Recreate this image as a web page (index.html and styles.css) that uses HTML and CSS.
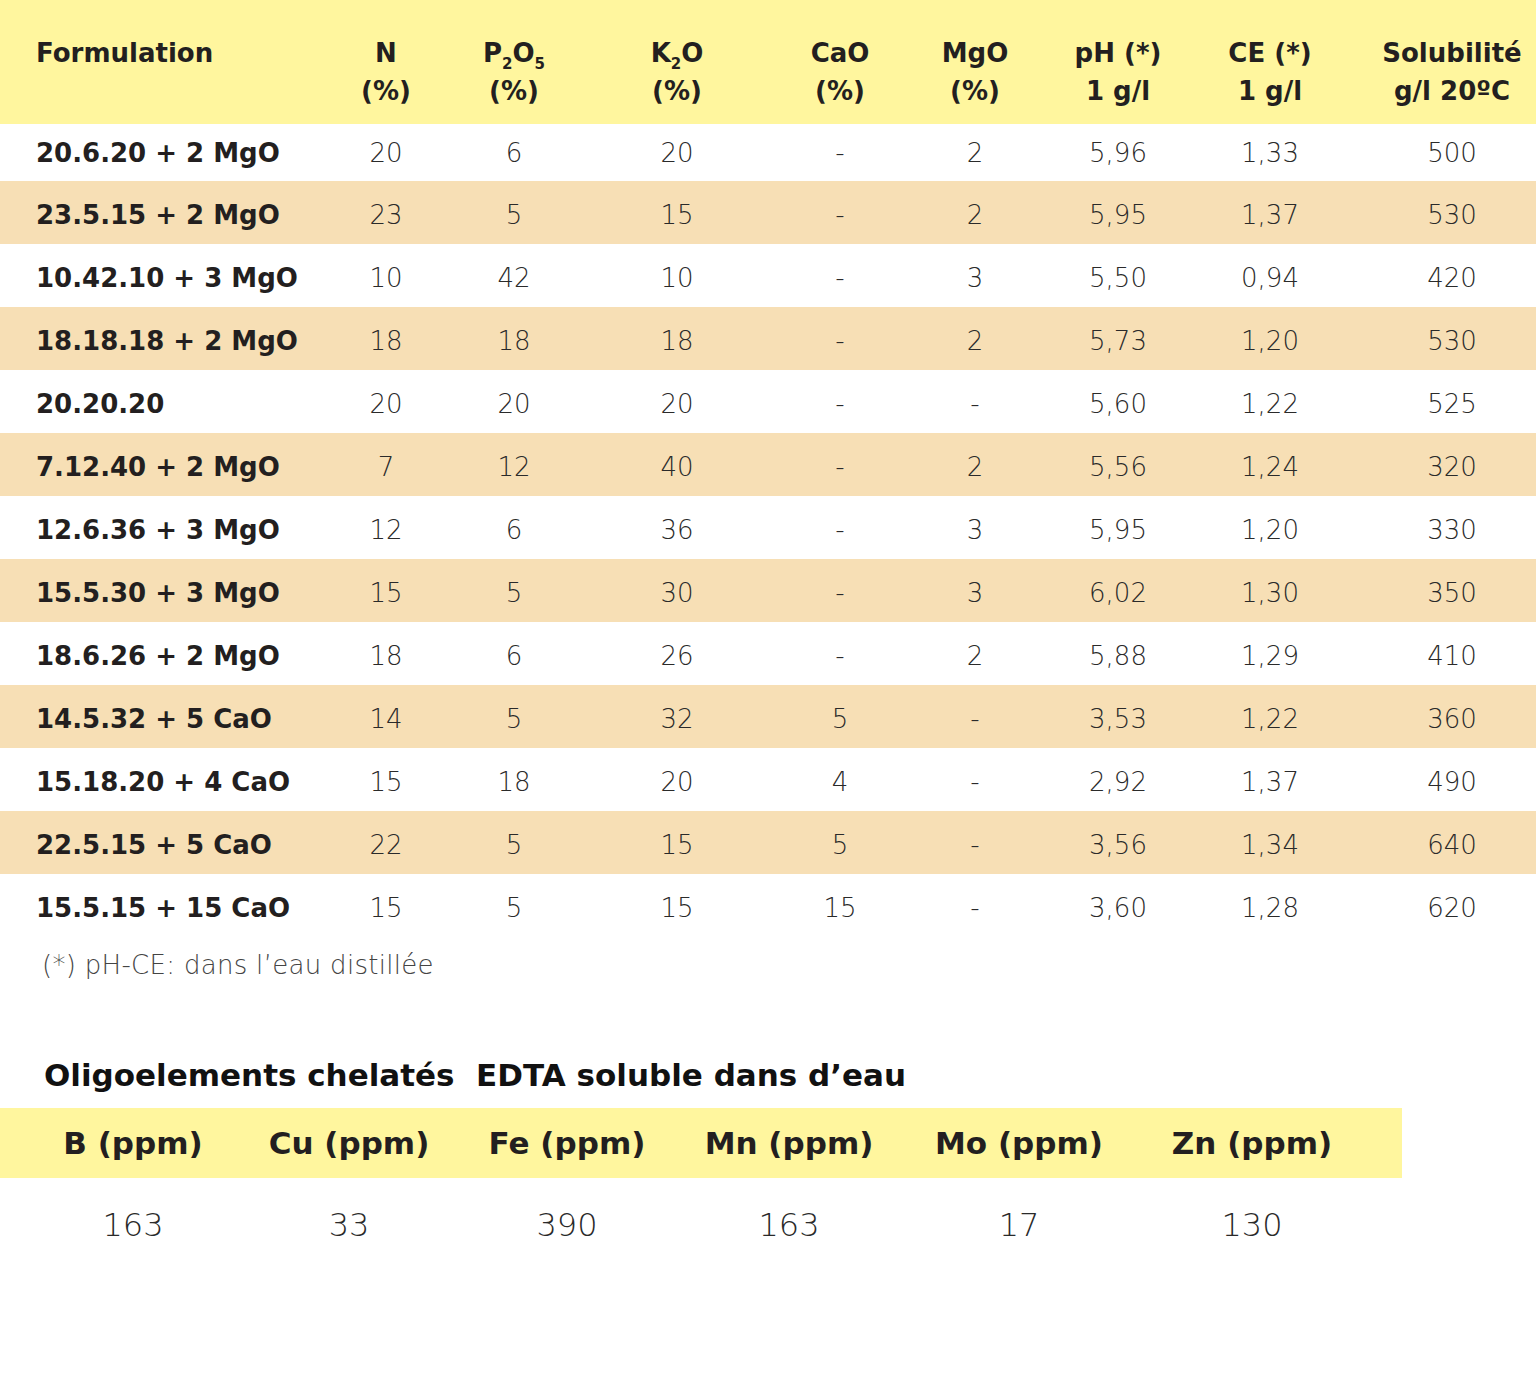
FILE: index.html
```html
<!DOCTYPE html>
<html lang="fr">
<head>
<meta charset="utf-8">
<title>Formulations</title>
<link rel="stylesheet" href="styles.css">
</head>
<body>
<table class="main">
  <colgroup>
    <col class="c-form"><col class="c-n"><col class="c-p"><col class="c-k"><col class="c-ca"><col class="c-mg"><col class="c-ph"><col class="c-ce"><col class="c-sol">
  </colgroup>
  <thead>
    <tr>
      <th class="first">Formulation</th>
      <th>N<br>(%)</th>
      <th>P<sub>2</sub>O<sub>5</sub><br>(%)</th>
      <th>K<sub>2</sub>O<br>(%)</th>
      <th>CaO<br>(%)</th>
      <th>MgO<br>(%)</th>
      <th>pH (*)<br>1 g/l</th>
      <th>CE (*)<br>1 g/l</th>
      <th class="sol">Solubilité<br>g/l 20ºC</th>
    </tr>
  </thead>
  <tbody>
    <tr class="r1"><td class="first">20.6.20 + 2 MgO</td><td>20</td><td>6</td><td>20</td><td>-</td><td>2</td><td>5,96</td><td>1,33</td><td class="sol">500</td></tr>
    <tr class="alt"><td class="first">23.5.15 + 2 MgO</td><td>23</td><td>5</td><td>15</td><td>-</td><td>2</td><td>5,95</td><td>1,37</td><td class="sol">530</td></tr>
    <tr><td class="first">10.42.10 + 3 MgO</td><td>10</td><td>42</td><td>10</td><td>-</td><td>3</td><td>5,50</td><td>0,94</td><td class="sol">420</td></tr>
    <tr class="alt"><td class="first">18.18.18 + 2 MgO</td><td>18</td><td>18</td><td>18</td><td>-</td><td>2</td><td>5,73</td><td>1,20</td><td class="sol">530</td></tr>
    <tr><td class="first">20.20.20</td><td>20</td><td>20</td><td>20</td><td>-</td><td>-</td><td>5,60</td><td>1,22</td><td class="sol">525</td></tr>
    <tr class="alt"><td class="first">7.12.40 + 2 MgO</td><td>7</td><td>12</td><td>40</td><td>-</td><td>2</td><td>5,56</td><td>1,24</td><td class="sol">320</td></tr>
    <tr><td class="first">12.6.36 + 3 MgO</td><td>12</td><td>6</td><td>36</td><td>-</td><td>3</td><td>5,95</td><td>1,20</td><td class="sol">330</td></tr>
    <tr class="alt"><td class="first">15.5.30 + 3 MgO</td><td>15</td><td>5</td><td>30</td><td>-</td><td>3</td><td>6,02</td><td>1,30</td><td class="sol">350</td></tr>
    <tr><td class="first">18.6.26 + 2 MgO</td><td>18</td><td>6</td><td>26</td><td>-</td><td>2</td><td>5,88</td><td>1,29</td><td class="sol">410</td></tr>
    <tr class="alt"><td class="first">14.5.32 + 5 CaO</td><td>14</td><td>5</td><td>32</td><td>5</td><td>-</td><td>3,53</td><td>1,22</td><td class="sol">360</td></tr>
    <tr><td class="first">15.18.20 + 4 CaO</td><td>15</td><td>18</td><td>20</td><td>4</td><td>-</td><td>2,92</td><td>1,37</td><td class="sol">490</td></tr>
    <tr class="alt"><td class="first">22.5.15 + 5 CaO</td><td>22</td><td>5</td><td>15</td><td>5</td><td>-</td><td>3,56</td><td>1,34</td><td class="sol">640</td></tr>
    <tr><td class="first">15.5.15 + 15 CaO</td><td>15</td><td>5</td><td>15</td><td>15</td><td>-</td><td>3,60</td><td>1,28</td><td class="sol">620</td></tr>
  </tbody>
</table>

<p class="note">(*) pH-CE: dans l’eau distillée</p>

<h2 class="title">Oligoelements chelatés&nbsp; EDTA soluble dans d’eau</h2>

<div class="oligo">
  <div class="oligo-head">
    <span>B (ppm)</span>
    <span>Cu (ppm)</span>
    <span>Fe (ppm)</span>
    <span>Mn (ppm)</span>
    <span>Mo (ppm)</span>
    <span>Zn (ppm)</span>
  </div>
  <div class="oligo-vals">
    <span>163</span>
    <span>33</span>
    <span>390</span>
    <span>163</span>
    <span>17</span>
    <span>130</span>
  </div>
</div>
</body>
</html>
```

FILE: styles.css
```css
html, body {
  margin: 0;
  padding: 0;
  background: #ffffff;
}

body {
  width: 1536px;
  font-family: "DejaVu Sans", "Liberation Sans", sans-serif;
  color: #231f20;
}

.main {
  width: 1536px;
  border-collapse: collapse;
  table-layout: fixed;
}

.c-form { width: 330px; }
.c-n { width: 112px; }
.c-p { width: 144px; }
.c-k { width: 182px; }
.c-ca { width: 144px; }
.c-mg { width: 126px; }
.c-ph { width: 160px; }
.c-ce { width: 144px; }
.c-sol { width: 194px; }

.main thead tr {
  background: #fff69e;
  height: 124px;
}

.main th {
  font-weight: 700;
  font-size: 26px;
  line-height: 38px;
  vertical-align: top;
  text-align: center;
  padding: 34px 0 14px;
  color: #231f20;
}

.main th.first,
.main td.first {
  text-align: left;
  padding-left: 36px;
}

.main th.sol,
.main td.sol {
  padding-left: 26px;
}

.main sub {
  font-size: 15px;
  line-height: 0;
  vertical-align: -7px;
}

.main tbody tr {
  height: 63px;
}

.main tbody tr.r1 {
  height: 57px;
}

.main tbody tr.alt {
  background: #f7dfb5;
}

.main td {
  font-size: 26px;
  font-weight: 200;
  text-align: center;
  vertical-align: middle;
  padding: 5px 0 0;
  color: #2a2a2a;
  line-height: 30px;
}

.main tbody tr.r1 td {
  padding-top: 0;
}

.main td.first {
  font-weight: 700;
  color: #231f20;
}

.note {
  margin: 13px 0 0 42px;
  font-size: 26px;
  font-weight: 200;
  line-height: 30px;
  letter-spacing: 0.3px;
  color: #444444;
}

.title {
  margin: 75px 0 0 44px;
  font-size: 31px;
  font-weight: 700;
  line-height: 40px;
  color: #111111;
}

.oligo {
  margin-top: 13px;
  width: 1402px;
}

.oligo-head,
.oligo-vals {
  display: grid;
  grid-template-columns: 214px 218px 218px 226px 234px 232px;
  padding-left: 26px;
  text-align: center;
  white-space: nowrap;
}

.oligo-head {
  background: #fff69e;
  height: 70px;
  align-items: center;
  font-size: 31px;
  font-weight: 700;
  color: #231f20;
}

.oligo-vals {
  padding-top: 28px;
  font-size: 32px;
  font-weight: 200;
  line-height: 38px;
  color: #2a2a2a;
}
```
